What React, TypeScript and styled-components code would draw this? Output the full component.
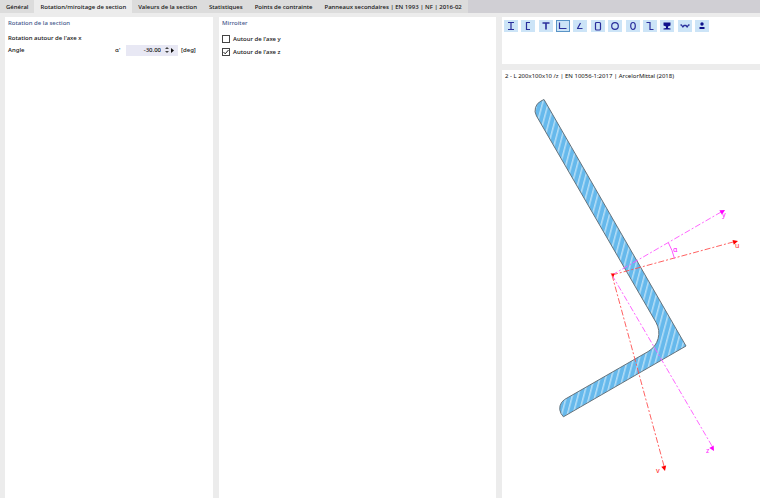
import React, { useState } from "react";
import styled, { createGlobalStyle } from "styled-components";

const GlobalStyle = createGlobalStyle`
  * { box-sizing: border-box; }
  body {
    margin: 0;
    background: #ececec;
    color: #111;
    font-family: "Noto Sans", "Open Sans", sans-serif;
    font-size: 6px;
    font-weight: 500;
    line-height: 12px;
  }
  button, input { font: inherit; color: inherit; }
`;

const Page = styled.div`
  display: flex;
  flex-direction: column;
  min-height: 100vh;
`;

const TabBar = styled.div`
  display: flex;
  height: 13px;
  background: #d0cfd4;
`;

const Tab = styled.button<{ $active?: boolean }>`
  border: 0;
  margin: 0;
  padding: 0 6px;
  line-height: 14px;
  white-space: nowrap;
  background: ${(p) => (p.$active ? "#ececec" : "#dcdcdc")};
`;

const Columns = styled.main`
  flex: 1;
  display: grid;
  grid-template-columns: 208fr 277fr 258fr;
  gap: 6px;
  padding: 4px 0 0 5px;
`;

const Panel = styled.section`
  background: #fff;
  padding: 0 3px;
`;

const PanelTitle = styled.h2`
  margin: 0 0 3px;
  font-size: 6px;
  font-weight: 500;
  color: #46588c;
`;

const Line = styled.div`
  display: flex;
  align-items: center;
  height: 12px;
`;

const AngleLabel = styled.label`
  width: 107px;
`;

const Symbol = styled.span`
  width: 11px;
`;

const Field = styled.div`
  display: flex;
  align-items: center;
  width: 52px;
  height: 11px;
  margin-right: 3px;
  background: #e8e8f4;
`;

const NumberInput = styled.input`
  width: 35px;
  height: 11px;
  padding: 0;
  border: 0;
  outline: 0;
  background: transparent;
  text-align: right;
`;

const Spin = styled.div`
  display: flex;
  flex-direction: column;
  margin-left: 3px;
`;

const StepButton = styled.button`
  display: flex;
  padding: 1px;
  border: 0;
  background: transparent;
`;

const CheckLine = styled.label`
  display: flex;
  align-items: center;
  gap: 3px;
  height: 13px;
`;

const CheckBox = styled.input`
  appearance: none;
  width: 8px;
  height: 8px;
  margin: 0;
  border: 1px solid #444;
  background: #fff;
`;

const CheckWrap = styled.span`
  display: grid;
  > * { grid-area: 1 / 1; }
  svg { pointer-events: none; }
`;

const RightColumn = styled.div`
  display: flex;
  flex-direction: column;
  gap: 6px;
`;

const ToolPanel = styled(Panel)`
  height: 47px;
  padding: 3px 2px;
`;

const ShapeRow = styled.div`
  display: flex;
  justify-content: space-between;
  max-width: 205px;
`;

const ShapeButton = styled.button<{ $active?: boolean }>`
  display: grid;
  place-items: center;
  width: 14px;
  height: 12px;
  padding: 0;
  border: 0;
  background: #cce4f7;
  outline: ${(p) => (p.$active ? "1px solid #5a94c6" : "0")};
  outline-offset: -1px;
`;

const PreviewPanel = styled(Panel)`
  flex: 1;
  display: flex;
  flex-direction: column;
  padding: 0;
`;

const Caption = styled.div`
  padding-left: 3px;
  font-weight: 400;
  white-space: nowrap;
`;

const Drawing = styled.svg`
  display: block;
  width: 100%;
  font-size: 7px;
`;

const tabs = [
  "Général",
  "Rotation/miroitage de section",
  "Valeurs de la section",
  "Statistiques",
  "Points de contrainte",
  "Panneaux secondaires | EN 1993 | NF | 2016-02",
];

const shapes: { name: string; icon: React.ReactNode }[] = [
  { name: "Profilé I", icon: <path d="M4 2.5h6M4 9.5h6M7 2.5v7" /> },
  { name: "Profilé C", icon: <path d="M9 2.5H5.500v7H9" /> },
  { name: "Profilé T", icon: <path d="M3.500 3h7M7 3v6.500" strokeWidth="1.600" /> },
  { name: "Cornière", icon: <path d="M3.500 2.500v6H10.500" /> },
  { name: "Cornière inclinée", icon: <path d="M7.500 3L4.500 8.500H9.500" strokeLinejoin="round" /> },
  { name: "Profilé creux rectangulaire", icon: <rect x="4.500" y="2.500" width="5" height="7.500" rx="1" /> },
  { name: "Profilé creux circulaire", icon: <circle cx="7" cy="6" r="3.300" /> },
  { name: "Profilé creux ovale", icon: <ellipse cx="7" cy="6" rx="2.300" ry="3.500" /> },
  { name: "Profilé Z", icon: <path d="M3.500 2.500H7v7h3.500" /> },
  {
    name: "Rail",
    icon: <path d="M3.500 2.500h7v3L8 6.500V8l2.500 .5v1h-7v-1L6 8V6.500L3.500 5.500z" fill="#10128c" stroke="none" />,
  },
  { name: "Tôle ondulée", icon: <path d="M2.500 5h1l1.300 2L6 5.500h2L9.200 7l1.300-2h1" strokeWidth="1.300" strokeLinejoin="round" /> },
  {
    name: "Autres",
    icon: (
      <g fill="#10128c" stroke="none">
        <circle cx="7" cy="4" r="1.700" />
        <path d="M4.500 7h5v2h-5z" />
      </g>
    ),
  },
];

function ShapeToolbar() {
  const [selected, setSelected] = useState(3);
  return (
    <ToolPanel aria-label="Type de section">
      <ShapeRow>
        {shapes.map((s, i) => (
          <ShapeButton key={s.name} type="button" aria-label={s.name} $active={i === selected} onClick={() => setSelected(i)}>
            <svg width="14" height="12" viewBox="0 0 14 12" fill="none" stroke="#2a2f9c" strokeWidth="1.200">
              {s.icon}
            </svg>
          </ShapeButton>
        ))}
      </ShapeRow>
    </ToolPanel>
  );
}

function Check({ label, initial }: { label: string; initial: boolean }) {
  const [on, setOn] = useState(initial);
  return (
    <CheckLine>
      <CheckWrap>
        <CheckBox type="checkbox" checked={on} onChange={() => setOn(!on)} />
        {on && (
          <svg width="8" height="8" viewBox="0 0 8 8" fill="none" stroke="#222">
            <path d="M1.500 4l1.700 1.800L6.500 2" />
          </svg>
        )}
      </CheckWrap>
      {label}
    </CheckLine>
  );
}

function Arrow({ x, y, angle, color }: { x: number; y: number; angle: number; color: string }) {
  return <path d="M0 0L-5 -2.500V2.500z" fill={color} transform={`translate(${x} ${y}) rotate(${angle})`} />;
}

function SectionDrawing() {
  return (
    <Drawing viewBox="502 82 258 413" role="img" aria-label="Section L 200x100x10">
      <defs>
        <pattern id="hatch" width="5.500" height="20" patternUnits="userSpaceOnUse" patternTransform="rotate(15)">
          <rect width="5.500" height="20" fill="#66b9ec" />
          <rect width="1.500" height="20" fill="#b4ddf6" />
        </pattern>
      </defs>
      <path
        d="M686 346L544 99.500L541 101A10.700 10.700 0 0 0 536.500 116L656 322.400A21.300 21.300 0 0 1 648.200 351.500L564.500 399.500A10.700 10.700 0 0 0 561 413.500L563.400 416.800z"
        fill="url(#hatch)"
        stroke="#66737c"
        strokeWidth="1"
      />
      <g fill="none" strokeDasharray="6 2 2 2" strokeWidth="0.900">
        <path d="M612 275L722 211.500M612 275L712 446" stroke="#ff55ff" />
        <path d="M612 275L735 241.500M612 275L664 466" stroke="#ff5050" />
      </g>
      <path d="M668.500 243A65 65 0 0 1 674.500 258.500" fill="none" stroke="#f5f" />
      <path d="M610.500 273.500h4l-1 3.500z" fill="#f00" />
      <Arrow x={725} y={210} angle={-30} color="#f0f" />
      <Arrow x={714} y={451} angle={60} color="#f0f" />
      <Arrow x={738} y={241} angle={-15} color="#f00" />
      <Arrow x={665} y={471} angle={75} color="#f00" />
      <g fill="#f3f">
        <text x="722" y="217">y</text>
        <text x="673" y="252">α</text>
        <text x="706" y="453">z</text>
      </g>
      <g fill="#ff4040">
        <text x="735" y="248">u</text>
        <text x="656" y="473">v</text>
      </g>
    </Drawing>
  );
}

export default function App() {
  const [tab, setTab] = useState(1);
  const [angle, setAngle] = useState("-30.00");
  const step = (d: number) => setAngle((Number(angle) + d).toFixed(2));
  return (
    <Page>
      <GlobalStyle />
      <TabBar role="tablist">
        {tabs.map((t, i) => (
          <Tab key={t} type="button" role="tab" aria-selected={i === tab} $active={i === tab} onClick={() => setTab(i)}>
            {t}
          </Tab>
        ))}
      </TabBar>
      <Columns>
        <Panel>
          <PanelTitle>Rotation de la section</PanelTitle>
          <Line>Rotation autour de l'axe x</Line>
          <Line>
            <AngleLabel htmlFor="angle">Angle</AngleLabel>
            <Symbol>α'</Symbol>
            <Field>
              <NumberInput id="angle" value={angle} onChange={(e) => setAngle(e.target.value)} />
              <Spin>
                <StepButton type="button" aria-label="Augmenter" onClick={() => step(1)}>
                  <svg width="4" height="2" viewBox="0 0 4 2"><path d="M0 2l2-2 2 2z" fill="#444" /></svg>
                </StepButton>
                <StepButton type="button" aria-label="Diminuer" onClick={() => step(-1)}>
                  <svg width="4" height="2" viewBox="0 0 4 2"><path d="M0 0l2 2 2-2z" fill="#444" /></svg>
                </StepButton>
              </Spin>
              <StepButton type="button" aria-label="Plus">
                <svg width="3" height="5" viewBox="0 0 3 5"><path d="M0 0l3 2.500L0 5z" fill="#111" /></svg>
              </StepButton>
            </Field>
            [deg]
          </Line>
        </Panel>
        <Panel>
          <PanelTitle>Mirroiter</PanelTitle>
          <Check label="Autour de l'axe y" initial={false} />
          <Check label="Autour de l'axe z" initial />
        </Panel>
        <RightColumn>
          <ShapeToolbar />
          <PreviewPanel>
            <Caption>2 - L 200x100x10 /z | EN 10056-1:2017 | ArcelorMittal (2018)</Caption>
            <SectionDrawing />
          </PreviewPanel>
        </RightColumn>
      </Columns>
    </Page>
  );
}
